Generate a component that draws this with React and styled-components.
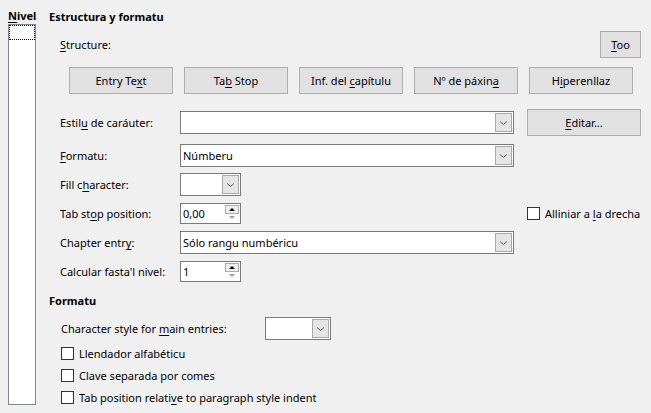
import React from "react";
import styled, { createGlobalStyle } from "styled-components";

const Global = createGlobalStyle`
  html, body { margin: 0; padding: 0; background: #f0f0f0; }
  body { font-family: "Noto Sans", "Open Sans", sans-serif; font-size: 11px; color: #000; }
  * { box-sizing: border-box; }
`;

const Page = styled.div`
  width: 651px;
  height: 413px;
  display: flex;
  padding: 8px 0 8px 8px;
  overflow: hidden;
`;

const LeftCol = styled.div`
  width: 28px;
  display: flex;
  flex-direction: column;
`;

const BoldLabel = styled.div`
  font-weight: 700;
  line-height: 16px;
  height: 16px;
  white-space: nowrap;
`;

const ListBox = styled.div`
  flex: 1;
  background: #fff;
  border: 1px solid #828790;
`;

const FocusRow = styled.div`
  height: 15px;
  border: 1px dotted #000;
`;

const Main = styled.div`
  flex: 1;
  min-width: 0;
  margin-left: 13px;
  padding-right: 10px;
  display: flex;
  flex-direction: column;
`;

const Header = styled(BoldLabel)`
  margin-top: 1px;
`;

const StructureRow = styled.div`
  display: flex;
  align-items: center;
  justify-content: space-between;
  padding-left: 11px;
  margin-top: 6px;
  height: 27px;
`;

const Button = styled.button`
  font: inherit;
  color: #000;
  height: 27px;
  width: ${(p) => p.$w || 104}px;
  background: #e1e1e1;
  border: 1px solid #adadad;
  padding: 0;
  white-space: nowrap;
  cursor: default;
`;

const ButtonRow = styled.div`
  display: flex;
  gap: 11px;
  padding-left: 20px;
  margin-top: 9px;
`;

const U = styled.u`
  text-decoration: underline;
  text-underline-offset: 2px;
  text-decoration-thickness: 1px;
`;

const Form = styled.div`
  display: grid;
  grid-template-columns: 120px 334px 127px;
  grid-template-rows: 29px 23px 23px 23px 23px 23px;
  row-gap: 6px;
  padding-left: 11px;
  margin-top: 15px;
`;

const Label = styled.div`
  display: flex;
  align-items: center;
  white-space: nowrap;
  height: ${(p) => p.$h || 23}px;
`;

const Combo = styled.div`
  display: flex;
  height: 23px;
  width: ${(p) => (p.$w ? `${p.$w}px` : "100%")};
  margin-top: ${(p) => p.$mt || 0}px;
  background: #fff;
  border: 1px solid #7a7a7a;
  padding: 1px;
`;

const ComboText = styled.div`
  flex: 1;
  display: flex;
  align-items: center;
  padding-left: 1px;
  white-space: nowrap;
  overflow: hidden;
`;

const DropBtn = styled.div`
  width: 17px;
  background: #e5e5e5;
  border: 1px solid #a8a8a8;
  display: flex;
  align-items: center;
  justify-content: center;
`;

const Spin = styled.div`
  display: flex;
  height: 21px;
  width: 61px;
  align-self: center;
  background: #fff;
  border: 1px solid #7a7a7a;
  padding: 1px;
`;

const SpinButtons = styled.div`
  width: 14px;
  display: flex;
  flex-direction: column;
`;

const SpinHalf = styled.div`
  flex: 1;
  display: flex;
  align-items: center;
  justify-content: center;
  border: 1px solid ${(p) => (p.$active ? "#adadad" : "transparent")};
  background: ${(p) => (p.$active ? "#f0f0f0" : "#fff")};
`;

const Tri = styled.div`
  width: 0;
  height: 0;
  border-left: 3px solid transparent;
  border-right: 3px solid transparent;
  ${(p) =>
    p.$down
      ? `border-top: 3px solid ${p.$c};`
      : `border-bottom: 3px solid ${p.$c};`}
`;

const SideCell = styled.div`
  display: flex;
  align-items: ${(p) => (p.$top ? "flex-start" : "center")};
  padding-left: 13px;
`;

const CheckRow = styled.label`
  display: flex;
  align-items: center;
  gap: 5px;
  height: ${(p) => p.$h || 22}px;
  white-space: nowrap;
`;

const Box = styled.span`
  width: 13px;
  height: 13px;
  background: #fff;
  border: 1px solid #333;
  flex-shrink: 0;
`;

const Section2 = styled.div`
  display: flex;
  flex-direction: column;
  margin-top: 10px;
`;

const Inner = styled.div`
  display: flex;
  flex-direction: column;
  padding-left: 12px;
  margin-top: 8px;
`;

const CharStyleRow = styled.div`
  display: flex;
  align-items: center;
  height: 23px;
  margin-bottom: 2px;
`;

const CharLabel = styled.div`
  width: 204px;
  white-space: nowrap;
`;

const Chevron = () => (
  <svg width="9" height="6" viewBox="0 0 9 6">
    <path d="M1 1.5 L4.5 4.5 L8 1.5" fill="none" stroke="#606060" strokeWidth="1" />
  </svg>
);

const ComboBox = ({ text, w, mt }) => (
  <Combo $w={w} $mt={mt}>
    <ComboText>{text}</ComboText>
    <DropBtn>
      <Chevron />
    </DropBtn>
  </Combo>
);

const SpinBox = ({ value }) => (
  <Spin>
    <ComboText>{value}</ComboText>
    <SpinButtons>
      <SpinHalf $active>
        <Tri $c="#000" />
      </SpinHalf>
      <SpinHalf>
        <Tri $down $c="#a0a0a0" />
      </SpinHalf>
    </SpinButtons>
  </Spin>
);

export default function App() {
  return (
    <Page>
      <Global />
      <LeftCol>
        <BoldLabel>
          <U>N</U>ivel
        </BoldLabel>
        <ListBox>
          <FocusRow />
        </ListBox>
      </LeftCol>
      <Main>
        <Header>Estructura y formatu</Header>
        <StructureRow>
          <span>
            <U>S</U>tructure:
          </span>
          <Button $w={41}>
            <U>T</U>oo
          </Button>
        </StructureRow>
        <ButtonRow>
          <Button>
            Entry Te<U>x</U>t
          </Button>
          <Button>
            Ta<U>b</U> Stop
          </Button>
          <Button>
            Inf. del <U>c</U>apítulu
          </Button>
          <Button>
            Nº de páxin<U>a</U>
          </Button>
          <Button>
            H<U>i</U>perenllaz
          </Button>
        </ButtonRow>
        <Form>
          <Label $h={27}>
            Estil<U>u</U>&nbsp;de caráuter:
          </Label>
          <ComboBox text="" mt={2} />
          <SideCell $top>
            <Button $w={114}>
              <U>E</U>ditar...
            </Button>
          </SideCell>

          <Label>
            <U>F</U>ormatu:
          </Label>
          <ComboBox text="Númberu" />
          <div />

          <Label>
            Fill c<U>h</U>aracter:
          </Label>
          <ComboBox text="" w={61} />
          <div />

          <Label>
            Tab st<U>o</U>p position:
          </Label>
          <SpinBox value="0,00" />
          <SideCell>
            <CheckRow $h={23}>
              <Box />
              <span>
                Alliniar a <U>l</U>a drecha
              </span>
            </CheckRow>
          </SideCell>

          <Label>
            Chapter entr<U>y</U>:
          </Label>
          <ComboBox text="Sólo rangu numbéricu" />
          <div />

          <Label>Calcular fasta'l nivel:</Label>
          <SpinBox value="1" />
          <div />
        </Form>
        <Section2>
          <BoldLabel>Formatu</BoldLabel>
          <Inner>
            <CharStyleRow>
              <CharLabel>
                Character style for <U>m</U>ain entries:
              </CharLabel>
              <ComboBox text="" w={66} />
            </CharStyleRow>
            <CheckRow>
              <Box />
              <span>Llendador alfabéticu</span>
            </CheckRow>
            <CheckRow>
              <Box />
              <span>Clave separada por comes</span>
            </CheckRow>
            <CheckRow>
              <Box />
              <span>
                Tab position relati<U>v</U>e to paragraph style indent
              </span>
            </CheckRow>
          </Inner>
        </Section2>
      </Main>
    </Page>
  );
}
